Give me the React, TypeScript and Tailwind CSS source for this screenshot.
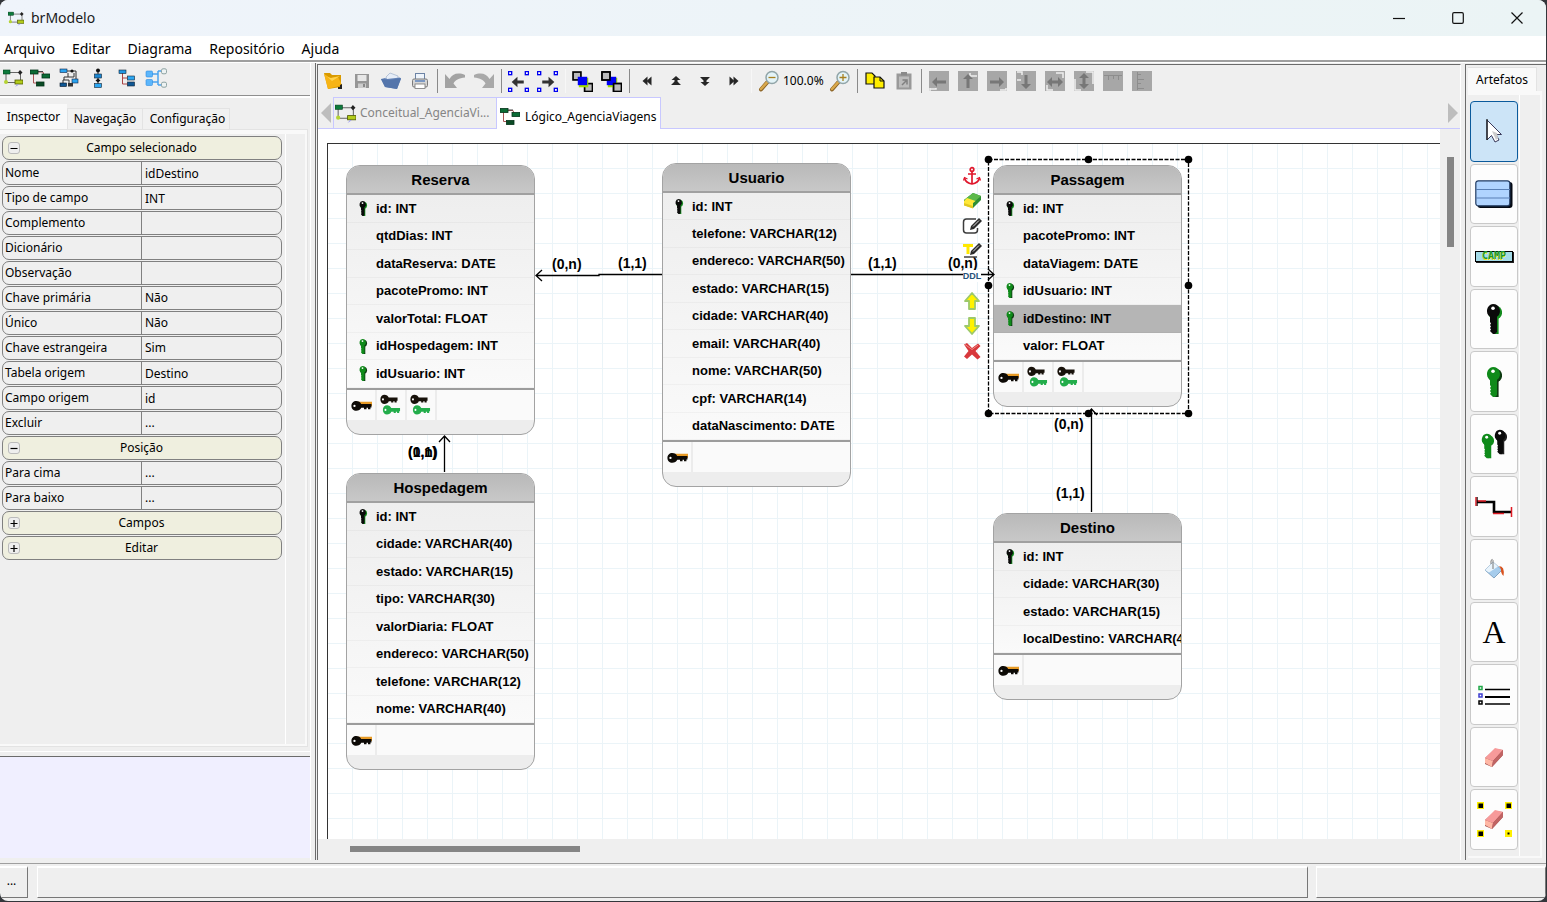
import type { ReactNode } from 'react';

/* ---------- shared icon pieces ---------- */

type Shade = { body: string; shade: string };
const DARK: Shade = { body: '#0a0a0a', shade: '#128a1c' };
const GREEN: Shade = { body: '#0f8a1a', shade: '#0c3a10' };

function UprightKey({ tone, className }: { tone: Shade; className: string }) {
  return (
    <svg viewBox="0 0 16 30" className={className} aria-hidden="true">
      <g fill={tone.shade} transform="translate(1.6 1)">
        <circle cx="7.5" cy="7.5" r="7" />
        <path d="M5 13h6v16H7l-2-2z" />
      </g>
      <g fill={tone.body}>
        <path d="M7 0a7 7 0 0 1 4 12.7V28l-2 2H7l-3-3 1-1.500-1-1.500 1-1.500-1-1.500 1-1.500-1-1.500V12.700A7 7 0 0 1 7 0z" />
      </g>
      <circle cx="7" cy="4.200" r="1.800" fill="#fff" />
    </svg>
  );
}

function FlatKey({ color, glow }: { color: string; glow?: string }) {
  return (
    <g>
      {glow && <path d="M6 1.500h14v4H9z" fill={glow} />}
      <path
        d="M5 .8c2.200 0 4 1.100 4.700 2.800H19.500v3.200h-1v1.700h-2.300v-1.300h-1.400v1.300h-2.400V7.200H9.800C9 9 7.200 10 5 10 2.400 10 .4 8 .4 5.400S2.400.8 5 .8z"
        fill={color}
      />
      <circle cx="3.300" cy="5.400" r="1.100" fill="#fff" />
    </g>
  );
}

function PrimaryKeyIcon() {
  return (
    <svg viewBox="0 0 20 10" className="h-[11px] w-[21px]" aria-hidden="true">
      <FlatKey color="#0d0a06" glow="#e79a25" />
    </svg>
  );
}

function ForeignKeyIcon() {
  return (
    <svg viewBox="0 0 22 22" className="size-[22px]" aria-hidden="true">
      <g transform="translate(0 0) scale(.9 1)">
        <FlatKey color="#17110a" />
      </g>
      <g transform="translate(2.500 10.500) scale(.9 1)">
        <FlatKey color="#23ad4b" />
      </g>
    </svg>
  );
}

function ConceptIcon({ className = 'h-5 w-5' }: { className?: string }) {
  return (
    <svg viewBox="0 0 20 20" className={className} aria-hidden="true">
      <path d="M3 5v9M3 4.500h14M17.500 4v8M3 14.500h12" stroke="#666" fill="none" />
      <rect x="0" y="2" width="7" height="4" fill="#0d7a3c" stroke="#06401d" strokeWidth=".6" />
      <path d="M17 2l2.500 2.500L17 7l-2-2.500z" fill="#222" />
      <circle cx="3" cy="14" r="2" fill="#b5d334" />
      <rect x="12" y="12" width="8" height="4" fill="#b3cc1c" stroke="#4f5a00" strokeWidth=".8" />
      <path d="M12 19l2-2.500h2z" fill="#9a9af0" />
    </svg>
  );
}

function LogicIcon({ className = 'h-5 w-5' }: { className?: string }) {
  return (
    <svg viewBox="0 0 20 20" className={className} aria-hidden="true">
      <path d="M6 4h7l1 3M3.500 6v9h4" stroke="#a55" fill="none" />
      <path d="M6 3.500h7" stroke="#444" />
      <rect x="0" y="2" width="8" height="4" fill="#0b6b35" stroke="#043319" strokeWidth=".8" />
      <rect x="12" y="6" width="8" height="4" fill="#0b6b35" stroke="#043319" strokeWidth=".8" />
      <rect x="6.500" y="14" width="7.500" height="4" fill="#0b4b25" stroke="#043319" strokeWidth=".8" />
    </svg>
  );
}

function HybridIcon() {
  return (
    <svg viewBox="0 0 20 20" className="size-5" aria-hidden="true">
      <path d="M8 3h9v8M9 5v4M15 5v4H5v3M4 12h6v3M4 12v3" stroke="#333" fill="none" />
      <rect x="1" y="1" width="7" height="3.500" fill="#29a3f0" stroke="#124" strokeWidth=".6" />
      <rect x="13" y="11" width="6" height="4" fill="#29a3f0" stroke="#124" strokeWidth=".6" />
      <rect x="1" y="15" width="6.500" height="3.500" fill="#0f5794" stroke="#012" strokeWidth=".6" />
      <circle cx="13" cy="3" r="1.600" fill="#111" />
      <rect x="9" y="15" width="5" height="3.500" fill="#333" />
    </svg>
  );
}

function FlowIcon() {
  return (
    <svg viewBox="0 0 20 20" className="size-5" aria-hidden="true">
      <path d="M10 1v16" stroke="#222" />
      <circle cx="10" cy="2.500" r="2" fill="#111" />
      <rect x="6.500" y="6" width="7" height="4" fill="#1d86d0" stroke="#123" strokeWidth=".6" />
      <path d="M10 10.500l2.500 2-2.500 2-2.500-2z" fill="#111" />
      <rect x="6.500" y="15.500" width="7" height="4" fill="#2da7f2" stroke="#123" strokeWidth=".6" />
    </svg>
  );
}

function TreeIcon() {
  return (
    <svg viewBox="0 0 20 20" className="size-5" aria-hidden="true">
      <path d="M5.500 5v11h6M5.500 10h6" stroke="#a44" fill="none" />
      <rect x="2" y="2" width="7" height="3.500" fill="#2196e3" stroke="#123" strokeWidth=".6" />
      <rect x="10.500" y="8" width="7" height="4" fill="#2da7f2" stroke="#123" strokeWidth=".6" />
      <rect x="10.500" y="14" width="7" height="4" fill="#0f5794" stroke="#123" strokeWidth=".6" />
    </svg>
  );
}

function ShareIcon() {
  return (
    <svg viewBox="0 0 22 20" className="h-5 w-[22px]" aria-hidden="true">
      <path d="M5 6h8M5 14h8M13 3v14M13 3h5M13 17h5" stroke="#4aa3ef" strokeWidth="1.500" fill="none" />
      <rect x="1" y="3" width="6.500" height="6" rx="1" fill="#5cb6fb" stroke="#2d8be0" strokeWidth=".6" />
      <rect x="1" y="11.500" width="6.500" height="6" rx="1" fill="#5cb6fb" stroke="#2d8be0" strokeWidth=".6" />
      <rect x="16.500" y=".8" width="5" height="5" rx="1.500" fill="#eef3f3" stroke="#8ea3a3" />
      <rect x="16.500" y="14.200" width="5" height="5" rx="1.500" fill="#eef3f3" stroke="#8ea3a3" />
    </svg>
  );
}

function Icon20({ children }: { children: ReactNode }) {
  return (
    <svg viewBox="0 0 20 20" className="size-5 shrink-0" aria-hidden="true">
      {children}
    </svg>
  );
}

const corners = [
  [1, 1],
  [17, 1],
  [1, 17],
  [17, 17],
];

function SelectionArrow({ flip }: { flip?: boolean }) {
  return (
    <svg viewBox="0 0 20 20" className="size-[21px]" aria-hidden="true">
      {corners.map(([x, y]) => (
        <rect key={`${x}-${y}`} x={x - 0.5} y={y - 0.5} width="3" height="3" fill="#fff" stroke="#0000f0" strokeWidth="1.300" />
      ))}
      <path d={flip ? 'M16.500 10.500L11 5.500v3.500H5v3h6v3.500z' : 'M3.500 10.500L9 5.500v3.500h6v3H9v3.500z'} fill="#333" />
    </svg>
  );
}

function OrderIcon({ spread }: { spread?: boolean }) {
  return (
    <svg viewBox="0 0 20 20" className="size-[21px]" aria-hidden="true">
      <rect x="1" y="1" width="7.500" height="7.500" fill="#bbb" stroke="#000" strokeWidth="1.600" />
      <rect x="12" y="12" width="7.500" height="7.500" fill="#bbb" stroke="#000" strokeWidth="1.600" />
      <rect x="6.500" y="6.500" width="9" height="9" fill="#a3e000" />
      <rect x="5.500" y="5.500" width="9" height="8" fill="#0000f5" />
      {spread && <rect x="12" y="12" width="7.500" height="7.500" fill="#bbb" stroke="#000" strokeWidth="1.600" />}
      {spread && <rect x="1" y="1" width="7.500" height="7.500" fill="#bbb" stroke="#000" strokeWidth="1.600" />}
    </svg>
  );
}

function DoubleArrow({ turn }: { turn: number }) {
  return (
    <Icon20>
      <g transform={`rotate(${turn} 10 10)`} fill="#262626">
        <path d="M10.500 5.500v9L5.500 10z" />
        <path d="M14.500 5.500v9L9.500 10z" />
      </g>
    </Icon20>
  );
}

function StackArrow({ down }: { down?: boolean }) {
  return (
    <Icon20>
      <g transform={down ? 'rotate(180 10 10)' : undefined} fill="#262626">
        <path d="M10 5l4.500 4h-3v1.500l3.500 3.500H5l3.500-3.500V9h-3z" />
      </g>
    </Icon20>
  );
}

function Lens({ plus }: { plus?: boolean }) {
  return (
    <svg viewBox="0 0 22 22" className="size-[22px] shrink-0" aria-hidden="true">
      <path d="M9.500 12L3 19.500" stroke="#8a6224" strokeWidth="4" strokeLinecap="round" />
      <path d="M9 12.300L3 19" stroke="#d9a84c" strokeWidth="2.500" strokeLinecap="round" />
      <circle cx="14" cy="7.500" r="6" fill="#e3f3f7" stroke="#91a5a8" strokeWidth="1.500" />
      <path d={plus ? 'M10.500 7.500h7M14 4v7' : 'M10.500 7.500h7'} stroke="#a8801f" strokeWidth="1.300" />
    </svg>
  );
}

const alignShapes = [
  'M3 11l5-5v3.500h9v3H8V16z',
  'M10 3l5 5h-3.500v9h-3V8H5z',
  'M17 11l-5-5v3.500H3v3h9V16z',
  'M10 18l5-5h-3.500V4h-3v9H5z',
  'M2 11l5-5v3.500h6V6l5 5-5 5v-3.500H7V16z',
  'M10 2l5 5h-3.500v6H15l-5 5-5-5h3.500V7H5z',
];
const alignTrims = [
  'M1 18h6v-1M1 17v3',
  'M12 2v3h7',
  'M19 17v2h-6',
  'M1 1h5v3M1 9h4',
  'M11 2h7v5M2 14v5h6',
  'M12 1h7v12M1 8v11h6',
];

function AlignIcon({ index }: { index: number }) {
  return (
    <svg viewBox="0 0 20 20" className="size-5" aria-hidden="true">
      <rect width="20" height="20" fill="#a7a7a7" />
      {index < 6 ? (
        <>
          <path d={alignTrims[index]} stroke="#efefef" strokeWidth="1.500" fill="none" />
          <path d={alignShapes[index]} fill="#777" />
        </>
      ) : index === 6 ? (
        <path d="M1 4.500h18M5.500 5v4M10.500 5v3M15.500 5v4" stroke="#8d8d8d" fill="none" />
      ) : (
        <path d="M5.500 1v18M5 3.500h4M5 8.500h7M5 12.500h4M5 17.500h7" stroke="#8d8d8d" fill="none" />
      )}
    </svg>
  );
}

/* ---------- top toolbar ---------- */

const tools: { label: string; icon: ReactNode }[][] = [
  [
    {
      label: 'Abrir',
      icon: (
        <Icon20>
          <path d="M1 2h6l2 2h9v12L5 18z" fill="#d99a00" />
          <path d="M1 3l4 15 14-4-4-8-8 1z" fill="#f7b416" />
          <path d="M1 3l4 3 3 1 9-2-8 5z" fill="#ffd34e" />
          <path d="M17 14l2-1v5h-4v-2h2z" fill="#222" />
        </Icon20>
      ),
    },
    {
      label: 'Salvar',
      icon: (
        <Icon20>
          <path d="M3 3h14v14H3z" fill="#969696" />
          <path d="M5.500 4h9v6h-9z" fill="#e7e7e7" />
          <path d="M6 12.500h8V17H6z" fill="#ccc" />
          <path d="M11 13h2v3h-2z" fill="#888" />
        </Icon20>
      ),
    },
    {
      label: 'Salvar como',
      icon: (
        <Icon20>
          <path d="M5 6l4-4 8 3v4H6z" fill="#e6edf7" stroke="#9db0cc" strokeWidth=".7" />
          <path d="M0 8l4-1 2 1 13-1.500 1 1.500-4 10-12-2z" fill="#6484b8" />
          <path d="M0 8l4 8 12 2 4-11-11 2z" fill="#5475ab" />
        </Icon20>
      ),
    },
    {
      label: 'Imprimir',
      icon: (
        <Icon20>
          <rect x="5.500" y="2.500" width="9" height="7" fill="#eef4fb" stroke="#6c83a5" />
          <rect x="2.500" y="8" width="15" height="8" rx="1.500" fill="#d6d6d6" stroke="#7b7b7b" />
          <path d="M5 10h10" stroke="#5d83bd" strokeWidth="1.500" />
          <rect x="5" y="13" width="10" height="4.500" fill="#fff" stroke="#777" strokeWidth=".8" />
        </Icon20>
      ),
    },
  ],
  [
    {
      label: 'Desfazer',
      icon: (
        <Icon20>
          <path d="M0 3v14h12L8.500 12.500C10 9 14 7 20 6.500V4C13 1 7 3 4.500 8z" fill="#a3a3a3" />
        </Icon20>
      ),
    },
    {
      label: 'Refazer',
      icon: (
        <Icon20>
          <path d="M20 3v14H8l3.500-4.500C10 9 6 7 0 6.500V4c7-3 13-1 15.500 4z" fill="#a9a9a9" />
        </Icon20>
      ),
    },
  ],
  [
    { label: 'Seleção anterior', icon: <SelectionArrow /> },
    { label: 'Próxima seleção', icon: <SelectionArrow flip /> },
  ],
  [
    { label: 'Trazer para frente', icon: <OrderIcon /> },
    { label: 'Enviar para trás', icon: <OrderIcon spread /> },
  ],
  [
    { label: 'Mover para esquerda', icon: <DoubleArrow turn={0} /> },
    { label: 'Mover para cima', icon: <StackArrow /> },
    { label: 'Mover para baixo', icon: <StackArrow down /> },
    { label: 'Mover para direita', icon: <DoubleArrow turn={180} /> },
  ],
];

const clipboard: { label: string; icon: ReactNode }[] = [
  {
    label: 'Copiar',
    icon: (
      <Icon20>
        <path d="M1 2h6l3 3v8H1z" fill="#ffee00" stroke="#111" strokeWidth="1.200" />
        <path d="M9 6h6l4 4v7H9z" fill="#ffee00" stroke="#111" strokeWidth="1.200" />
        <path d="M15 6v4h4" fill="none" stroke="#111" />
      </Icon20>
    ),
  },
  {
    label: 'Colar',
    icon: (
      <Icon20>
        <rect x="2.500" y="2.500" width="15" height="16" fill="#999" />
        <rect x="7" y="1" width="6" height="3.500" fill="#8a8a8a" />
        <rect x="5" y="5.500" width="10" height="11" fill="#bcbcbc" />
        <path d="M8 14l4-4M8.500 9H13v4.500" stroke="#808080" strokeWidth="1.500" fill="none" />
      </Icon20>
    ),
  },
];

const alignLabels = [
  'Alinhar à esquerda',
  'Alinhar acima',
  'Alinhar à direita',
  'Alinhar abaixo',
  'Igualar largura',
  'Igualar altura',
  'Distribuir na horizontal',
  'Distribuir na vertical',
];

function ToolButton({ label, children }: { label: string; children: ReactNode }) {
  return (
    <button type="button" aria-label={label} className="flex h-8 w-[29px] shrink-0 items-center justify-center">
      {children}
    </button>
  );
}

function Divider({ faint }: { faint?: boolean }) {
  return (
    <div className="flex w-1.5 shrink-0 justify-center py-1">
      <div className={faint ? 'h-6 w-px bg-[#f7f7f7]' : 'h-6 w-px bg-[#8a8a8a]'} />
    </div>
  );
}

function MainToolbar() {
  return (
    <div className="flex h-8 items-center overflow-hidden">
      {tools.map((group, i) => (
        <div key={i} className="flex items-center">
          {group.map((t) => (
            <ToolButton key={t.label} label={t.label}>
              {t.icon}
            </ToolButton>
          ))}
          <Divider faint={i === 2 || i === 4} />
        </div>
      ))}
      <ToolButton label="Diminuir zoom">
        <Lens />
      </ToolButton>
      <span className="w-[42px] text-xs whitespace-nowrap">100.0%</span>
      <ToolButton label="Aumentar zoom">
        <Lens plus />
      </ToolButton>
      <Divider />
      {clipboard.map((t) => (
        <ToolButton key={t.label} label={t.label}>
          {t.icon}
        </ToolButton>
      ))}
      <Divider />
      {alignLabels.map((label, i) => (
        <ToolButton key={label} label={label}>
          <AlignIcon index={i} />
        </ToolButton>
      ))}
    </div>
  );
}

/* ---------- inspector ---------- */

type Prop =
  | { kind: 'group'; label: string; open: boolean }
  | { kind: 'text' | 'choice' | 'action'; label: string; value: string };

const props: Prop[] = [
  { kind: 'group', label: 'Campo selecionado', open: true },
  { kind: 'text', label: 'Nome', value: 'idDestino' },
  { kind: 'text', label: 'Tipo de campo', value: 'INT' },
  { kind: 'text', label: 'Complemento', value: '' },
  { kind: 'text', label: 'Dicionário', value: '' },
  { kind: 'text', label: 'Observação', value: '' },
  { kind: 'choice', label: 'Chave primária', value: 'Não' },
  { kind: 'choice', label: 'Único', value: 'Não' },
  { kind: 'choice', label: 'Chave estrangeira', value: 'Sim' },
  { kind: 'text', label: 'Tabela origem', value: 'Destino' },
  { kind: 'text', label: 'Campo origem', value: 'id' },
  { kind: 'action', label: 'Excluir', value: '...' },
  { kind: 'group', label: 'Posição', open: true },
  { kind: 'action', label: 'Para cima', value: '...' },
  { kind: 'action', label: 'Para baixo', value: '...' },
  { kind: 'group', label: 'Campos', open: false },
  { kind: 'group', label: 'Editar', open: false },
];

function PropertyRow({ item, id }: { item: Prop; id: string }) {
  if (item.kind === 'group') {
    return (
      <button
        type="button"
        aria-expanded={item.open}
        className="flex h-6 items-center rounded-[7px] border border-[#808080] bg-[#efefdf] pl-[5px]"
      >
        <svg viewBox="0 0 12 12" className="size-3 shrink-0" aria-hidden="true">
          <rect x=".5" y=".5" width="11" height="11" rx="2.500" fill="#eee" stroke="#bbb" />
          <path d={item.open ? 'M2.500 6.500h7' : 'M2.500 6.500h7M6 3v7'} stroke="#000" strokeWidth="1.200" />
        </svg>
        <span className="flex-1 pr-[18px] text-center">{item.label}</span>
      </button>
    );
  }
  const valueClass = 'h-full w-full min-w-0 appearance-none bg-transparent pl-[3px] text-left outline-none';
  return (
    <div className="grid h-6 grid-cols-[138px_1fr] items-center overflow-hidden rounded-[7px] border border-[#808080]">
      <label htmlFor={id} className="truncate pl-0.5">
        {item.label}
      </label>
      <div className="h-[22px] border-l border-[#808080]">
        {item.kind === 'text' && <input id={id} type="text" defaultValue={item.value} className={valueClass} />}
        {item.kind === 'choice' && (
          <select id={id} defaultValue={item.value} className={valueClass}>
            <option>Não</option>
            <option>Sim</option>
          </select>
        )}
        {item.kind === 'action' && (
          <button id={id} type="button" className={valueClass}>
            {item.value}
          </button>
        )}
      </div>
    </div>
  );
}

const modelIcons = [
  { label: 'Novo conceitual', icon: <ConceptIcon /> },
  { label: 'Novo lógico', icon: <LogicIcon /> },
  { label: 'Novo híbrido', icon: <HybridIcon /> },
  { label: 'Novo fluxo', icon: <FlowIcon /> },
  { label: 'Nova EAP', icon: <TreeIcon /> },
  { label: 'Novo livre', icon: <ShareIcon /> },
];

function Sidebar() {
  return (
    <aside className="flex w-[311px] shrink-0 flex-col border-r border-white">
      <div className="flex h-[33px] shrink-0 border-b border-[#8f8f8f] pt-px">
        {modelIcons.map((m, i) => (
          <button
            key={m.label}
            type="button"
            aria-label={m.label}
            className={`flex h-7 items-center justify-center ${i === 0 ? 'w-[25px]' : 'w-[29px]'}`}
          >
            {m.icon}
          </button>
        ))}
      </div>
      <div role="tablist" className="flex shrink-0 items-end border-t-2 border-white pt-1.5">
        <button role="tab" aria-selected="true" type="button" className="h-[25px] w-[67px] bg-[#f9f9f9]">
          Inspector
        </button>
        <button role="tab" aria-selected="false" type="button" className="h-[21px] w-[76px] border border-b-0 border-[#e3e3e3] bg-[#f1f1f1]">
          Navegação
        </button>
        <button role="tab" aria-selected="false" type="button" className="h-[21px] w-[87px] border border-b-0 border-l-0 border-[#e3e3e3] bg-[#f1f1f1] pl-[3px]">
          Configuração
        </button>
      </div>
      <div className="mr-0.5 flex min-h-0 flex-1 flex-col border-t border-r border-b border-[#e3e3e3] bg-[#f9f9f9] pt-1 pr-0.5 pb-0.5">
        <div className="flex flex-1 bg-[#efefef]">
          <div className="flex w-[286px] flex-col gap-px border-r border-white pt-0.5 pr-[3px] pl-0.5">
            {props.map((item, i) => (
              <PropertyRow key={item.label} item={item} id={`prop-${i}`} />
            ))}
          </div>
        </div>
      </div>
      <div className="mt-1 h-[5px] shrink-0 border-t border-white" />
      <div className="mb-0.5 h-[102px] shrink-0 border-t border-[#6b6b6b] bg-[#f0efff]" />
    </aside>
  );
}

/* ---------- diagram ---------- */

type Field = { text: string; key?: 'pk' | 'fk'; selected?: boolean };
type Entity = { name: string; place: string; rows: string; keys: ('pk' | 'fk')[]; fields: Field[] };

const entities: Entity[] = [
  {
    name: 'Reserva',
    place: 'left-[18px] top-[21px]',
    rows: 'h-[193px]',
    keys: ['pk', 'fk', 'fk'],
    fields: [
      { text: 'id: INT', key: 'pk' },
      { text: 'qtdDias: INT' },
      { text: 'dataReserva: DATE' },
      { text: 'pacotePromo: INT' },
      { text: 'valorTotal: FLOAT' },
      { text: 'idHospedagem: INT', key: 'fk' },
      { text: 'idUsuario: INT', key: 'fk' },
    ],
  },
  {
    name: 'Usuario',
    place: 'left-[334px] top-[19px]',
    rows: 'h-[247px]',
    keys: ['pk'],
    fields: [
      { text: 'id: INT', key: 'pk' },
      { text: 'telefone: VARCHAR(12)' },
      { text: 'endereco: VARCHAR(50)' },
      { text: 'estado: VARCHAR(15)' },
      { text: 'cidade: VARCHAR(40)' },
      { text: 'email: VARCHAR(40)' },
      { text: 'nome: VARCHAR(50)' },
      { text: 'cpf: VARCHAR(14)' },
      { text: 'dataNascimento: DATE' },
    ],
  },
  {
    name: 'Passagem',
    place: 'left-[665px] top-[21px]',
    rows: 'h-[165px]',
    keys: ['pk', 'fk', 'fk'],
    fields: [
      { text: 'id: INT', key: 'pk' },
      { text: 'pacotePromo: INT' },
      { text: 'dataViagem: DATE' },
      { text: 'idUsuario: INT', key: 'fk' },
      { text: 'idDestino: INT', key: 'fk', selected: true },
      { text: 'valor: FLOAT' },
    ],
  },
  {
    name: 'Hospedagem',
    place: 'left-[18px] top-[329px]',
    rows: 'h-[220px]',
    keys: ['pk'],
    fields: [
      { text: 'id: INT', key: 'pk' },
      { text: 'cidade: VARCHAR(40)' },
      { text: 'estado: VARCHAR(15)' },
      { text: 'tipo: VARCHAR(30)' },
      { text: 'valorDiaria: FLOAT' },
      { text: 'endereco: VARCHAR(50)' },
      { text: 'telefone: VARCHAR(12)' },
      { text: 'nome: VARCHAR(40)' },
    ],
  },
  {
    name: 'Destino',
    place: 'left-[665px] top-[369px]',
    rows: 'h-[110px]',
    keys: ['pk'],
    fields: [
      { text: 'id: INT', key: 'pk' },
      { text: 'cidade: VARCHAR(30)' },
      { text: 'estado: VARCHAR(15)' },
      { text: 'localDestino: VARCHAR(40)' },
    ],
  },
];

function EntityCard({ entity }: { entity: Entity }) {
  return (
    <section
      className={`absolute w-[189px] overflow-hidden rounded-[14px] border border-[#a3a3a3] bg-[#ededed] font-bold ${entity.place}`}
    >
      <h2 className="h-[29px] border-b-2 border-[#a0a0a0] bg-linear-to-b from-[#b9b9b9] to-[#c8c8c8] text-center text-[15px] leading-[28px]">
        {entity.name}
      </h2>
      <ul className={`grid auto-rows-fr bg-linear-to-b from-[#eeeeee] to-[#fafafa] text-[13px] ${entity.rows}`}>
        {entity.fields.map((f) => (
          <li
            key={f.text}
            className={`flex items-center border-b border-black/3 pl-[11px] whitespace-nowrap ${f.selected ? 'bg-[#b5b5b5]' : ''}`}
          >
            <span className="flex w-[18px] shrink-0">
              {f.key && <UprightKey tone={f.key === 'pk' ? DARK : GREEN} className="h-[15px] w-2.5" />}
            </span>
            {f.text}
          </li>
        ))}
      </ul>
      <div className="flex h-8 border-t-2 border-[#9c9c9c] bg-[#fafafa]">
        {entity.keys.map((k, i) => (
          <div key={i} className="flex w-[30px] items-center justify-center border-r-2 border-[#ececec]">
            {k === 'pk' ? <PrimaryKeyIcon /> : <ForeignKeyIcon />}
          </div>
        ))}
      </div>
      <div className="h-3.5" />
    </section>
  );
}

const cardinalities = [
  { text: '(0,n)', place: 'left-[224px] top-[110px]' },
  { text: '(1,1)', place: 'left-[290px] top-[109px]' },
  { text: '(1,1)', place: 'left-[540px] top-[109px]' },
  { text: '(0,n)', place: 'left-[620px] top-[109px]' },
  { text: '(0,n)', place: 'left-[80px] top-[298px]' },
  { text: '(1,1)', place: 'left-[80px] top-[298px]' },
  { text: '(0,n)', place: 'left-[726px] top-[270px]' },
  { text: '(1,1)', place: 'left-[728px] top-[339px]' },
];

const handles = [
  [660, 15],
  [760, 15],
  [860, 15],
  [660, 141],
  [860, 141],
  [660, 269],
  [760, 269],
  [860, 269],
];

const pencil = (
  <g>
    <path d="M8 14l1-4 8-8 3 3-8 8z" fill="#2b2b2b" />
    <path d="M11 10.500l6-6" stroke="#ddd" strokeWidth="1" />
  </g>
);

const quickActions = [
  {
    label: 'Ancorar',
    icon: (
      <Icon20>
        <g fill="none" stroke="#e0182d" strokeWidth="1.700">
          <circle cx="10" cy="3.500" r="1.800" />
          <path d="M10 5.500V18M6 8h8M2.500 12c1 4 4 5.500 7.500 6 3.500-.5 6.500-2 7.500-6" />
          <path d="M1.500 14.500l1-3 3 1.500M18.500 14.500l-1-3-3 1.500" strokeWidth="1.200" />
        </g>
      </Icon20>
    ),
  },
  {
    label: 'Limpar',
    icon: (
      <Icon20>
        <path d="M11 2l8 3v4l-8 8-9-3V9z" fill="#2f8f35" />
        <path d="M11 2l8 3-8 7-9-3z" fill="#5cb94a" />
        <path d="M2 10l3-3 8.500 3L11 12v5l-9-3z" fill="#ffe838" />
        <path d="M2 12l9 3v2.500l-9-3z" fill="#e3c81e" />
      </Icon20>
    ),
  },
  {
    label: 'Editar',
    icon: (
      <Icon20>
        <path d="M14 3H4.500Q1.500 3 1.500 6v8q0 3 3 3h8q3 0 3-3v-2" fill="none" stroke="#3c3c3c" strokeWidth="1.500" />
        {pencil}
      </Icon20>
    ),
  },
  {
    label: 'Editar texto',
    icon: (
      <Icon20>
        <path d="M1 3h10v3H7.500v7h-3V6H1z" fill="#ffe800" />
        <path d="M2 16h13" stroke="#444" strokeWidth="1.500" />
        {pencil}
      </Icon20>
    ),
  },
  { label: 'DDL', icon: null },
  {
    label: 'Subir',
    icon: (
      <Icon20>
        <path d="M10 2l7 8h-4v8H7v-8H3z" fill="#fff200" stroke="#9dc96a" strokeWidth="1.800" strokeLinejoin="round" />
      </Icon20>
    ),
  },
  {
    label: 'Descer',
    icon: (
      <Icon20>
        <path d="M10 18l7-8h-4V2H7v8H3z" fill="#fff200" stroke="#9dc96a" strokeWidth="1.800" strokeLinejoin="round" />
      </Icon20>
    ),
  },
  {
    label: 'Remover',
    icon: (
      <Icon20>
        <path d="M2 3.500L5 2l5 5 6-4.500L18.500 5l-5 5 5 6-3 2.500-5.500-5L5 18l-3-2.500L6.500 10z" fill="#d8383c" />
        <path d="M3 3.500l7 5 6-4.500" stroke="#ee8a86" fill="none" />
      </Icon20>
    ),
  },
];

function Diagram() {
  return (
    <div className="relative min-w-0 flex-1 overflow-hidden border-t border-l border-[#333] bg-white font-['Liberation_Sans',sans-serif]">
      <svg className="absolute inset-0 size-full" aria-hidden="true">
        <defs>
          <pattern id="grid" width="25" height="25" patternUnits="userSpaceOnUse">
            <path d="M24.500 25V0M0 24.500H25" stroke="#ebf4f8" fill="none" />
          </pattern>
        </defs>
        <rect width="100%" height="100%" fill="url(#grid)" />
      </svg>
      {entities.map((e) => (
        <EntityCard key={e.name} entity={e} />
      ))}
      <svg className="pointer-events-none absolute inset-0 size-full" aria-hidden="true">
        <g stroke="#000" fill="none" strokeWidth="1.300">
          <path d="M208 131.500H271V130.500H334M214 126l-6 5.500 6 5.500" />
          <path d="M523 130.500H666M660 125l6 5.500-6 5.500" />
          <path d="M116.500 328V292M111 298l5.500-6 5.500 6" />
          <path d="M763.500 368V265M758 271l5.500-6 5.500 6" />
          <rect x="660.500" y="15.500" width="200" height="254" strokeDasharray="4 1.500" />
        </g>
        {handles.map(([x, y]) => (
          <circle key={`${x}-${y}`} cx={x + 0.5} cy={y + 0.5} r="3.800" />
        ))}
      </svg>
      {cardinalities.map((c, i) => (
        <span key={i} className={`absolute text-sm leading-5 font-bold ${c.place}`}>
          {c.text}
        </span>
      ))}
      <div className="absolute top-[22px] left-[634px] flex flex-col gap-[5px]">
        {quickActions.map((a) => (
          <button key={a.label} type="button" aria-label={a.label} className="flex size-5 items-center justify-center">
            {a.icon ?? <span className="bg-white text-[9px] leading-3 font-bold text-[#28527a]">DDL</span>}
          </button>
        ))}
      </div>
    </div>
  );
}

function Workspace() {
  return (
    <section className="mt-px flex min-w-0 flex-1 flex-col border-t border-r border-l border-t-[#6b6b6b] border-r-white border-l-[#6b6b6b]">
      <MainToolbar />
      <div className="flex h-8 shrink-0 items-stretch justify-between border-b border-[#c8c8ff]">
        <div className="flex">
          <button type="button" aria-label="Abas anteriores" className="flex w-[15px] items-center justify-center">
            <svg viewBox="0 0 10 20" className="h-5 w-2.5">
              <path d="M10 0v20L0 10z" fill="#bdbdbd" />
            </svg>
          </button>
          <div role="tablist" className="flex">
            <button role="tab" aria-selected="false" type="button" className="flex w-[163px] items-center gap-1 border-t border-l border-[#c8c8ff] pl-px text-[#858585]">
              <ConceptIcon className="h-[21px] w-[21px] shrink-0" />
              <span className="whitespace-nowrap">Conceitual_AgenciaVi...</span>
            </button>
            <button role="tab" aria-selected="true" type="button" className="-mb-px flex w-[165px] items-center gap-[5px] border-t border-r border-l border-[#c8c8ff] bg-white pt-1.5 pl-[3px]">
              <LogicIcon className="h-[21px] w-5 shrink-0" />
              <span className="whitespace-nowrap">Lógico_AgenciaViagens</span>
            </button>
          </div>
        </div>
        <button type="button" aria-label="Próximas abas" className="flex w-[15px] items-center justify-center">
          <svg viewBox="0 0 10 20" className="h-5 w-2.5">
            <path d="M0 0v20L10 10z" fill="#bdbdbd" />
          </svg>
        </button>
      </div>
      <div className="flex min-h-0 flex-1">
        <div className="flex min-w-0 flex-1 bg-white pt-[14px] pl-[9px]">
          <Diagram />
        </div>
        <div className="w-5 pt-7 pl-[7px]">
          <div className="h-[90px] w-[7px] bg-[#858585]" />
        </div>
      </div>
      <div className="h-[21px] shrink-0 pt-[7px] pl-8">
        <div className="h-1.5 w-[230px] bg-[#858585]" />
      </div>
    </section>
  );
}

/* ---------- artefact palette ---------- */

const eraser = (
  <g>
    <path d="M16 9l8 1v5L13 27l-7-3v-6z" fill="#9b4b4b" />
    <path d="M16 8l8 2-10 11-8-3z" fill="#f79a9a" />
    <path d="M6 18l8 3-1 6-7-4z" fill="#ffb7a5" />
    <path d="M14 21L24 10v5L13 27z" fill="#c06464" />
  </g>
);

const artefacts = [
  {
    label: 'Selecionar',
    icon: (
      <svg viewBox="0 0 16 24" className="h-6 w-4" aria-hidden="true">
        <path d="M1 1v20l4.500-4.500L9 23l4-2-3-5.500h5.500z" fill="#fff" stroke="#39395a" />
        <path d="M6 12l5 2 1 5-2 2z" fill="#ccc" />
        <path d="M1 0v21" stroke="#111" strokeWidth="1.200" />
      </svg>
    ),
  },
  {
    label: 'Tabela',
    icon: (
      <svg viewBox="0 0 38 28" className="h-7 w-[38px]" aria-hidden="true">
        <rect x="2.500" y="2" width="35" height="26" rx="3" fill="#050a14" />
        <rect x=".8" y=".8" width="34" height="25" rx="2.500" fill="#b0d4ff" stroke="#223c63" strokeWidth="1.200" />
        <path d="M1 9.500h34M1 18h34" stroke="#587fb5" strokeWidth="1.200" />
      </svg>
    ),
  },
  {
    label: 'Campo',
    icon: (
      <span className="flex h-[11px] w-[38px] items-center justify-center border border-black bg-[#a4dbe8] font-['DejaVu_Sans_Mono',monospace] text-[10px] leading-none font-bold text-[#16953a] shadow-[1px_1px_0_#222] [text-shadow:0_1px_0_#ffee00]">
        CAMP
      </span>
    ),
  },
  { label: 'Chave primária', icon: <UprightKey tone={DARK} className="h-[30px] w-4" /> },
  { label: 'Chave estrangeira', icon: <UprightKey tone={GREEN} className="h-[30px] w-4" /> },
  {
    label: 'Chave composta',
    icon: (
      <span className="flex items-start">
        <UprightKey tone={{ body: '#0f8a1a', shade: '#0f8a1a' }} className="mt-1 h-[26px] w-[13px]" />
        <UprightKey tone={{ body: '#0a0a0a', shade: '#222' }} className="h-[26px] w-[13px]" />
      </span>
    ),
  },
  {
    label: 'Relacionamento',
    icon: (
      <svg viewBox="0 0 38 22" className="h-[22px] w-[38px]" aria-hidden="true">
        <path d="M2 6h17v10h17" fill="none" stroke="#000" strokeWidth="2.600" />
        <path d="M2 5h9M18 17.500h11" stroke="#e01b24" strokeWidth="1.500" />
        <path d="M1 1v9M36.500 11v10" stroke="#e01b24" strokeWidth="1.500" />
        <path d="M2.200 1v9" stroke="#000" />
      </svg>
    ),
  },
  {
    label: 'Cor',
    icon: (
      <svg viewBox="0 0 22 22" className="size-[22px]" aria-hidden="true">
        <path d="M10 4l9 8-8 8-9-8z" fill="#a6ccec" stroke="#6f93b5" strokeWidth=".8" />
        <path d="M10 4l5 4.500-9 6L2 12z" fill="#e9f4fc" />
        <path d="M10 11V2.500q-.5-2-2 0V6" fill="none" stroke="#777" />
        <path d="M16 8q6 0 4.500 10-3-3-2.500-7z" fill="#d9521e" />
      </svg>
    ),
  },
  {
    label: 'Texto',
    icon: <span className="font-['Liberation_Serif',serif] text-[32px] leading-8 text-black">A</span>,
  },
  {
    label: 'Legenda',
    icon: (
      <svg viewBox="0 0 32 20" className="h-5 w-8" aria-hidden="true">
        <path d="M7 4.500h25M7 19h25" stroke="#000" strokeWidth="1.300" />
        <path d="M7 12h25" stroke="#000" strokeWidth="2" />
        <g fill="#fff" strokeWidth="1.500">
          <rect x="1" y="1.500" width="3" height="3" stroke="#22a84a" />
          <rect x="1" y="9" width="3" height="3" stroke="#3c3cd0" />
          <rect x="1" y="16" width="3" height="3" stroke="#000" />
        </g>
      </svg>
    ),
  },
  {
    label: 'Apagar',
    icon: (
      <svg viewBox="0 0 30 34" className="h-[34px] w-[30px]" aria-hidden="true">
        {eraser}
      </svg>
    ),
  },
  {
    label: 'Apagar seleção',
    icon: (
      <svg viewBox="-2 0 35 36" className="h-9 w-[35px]" aria-hidden="true">
        {[
          [-2, 0],
          [26, 0],
          [-2, 28],
          [26, 28],
        ].map(([x, y], i) => (
          <g key={i}>
            <rect x={x} y={y} width="7" height="7" fill="#fff000" />
            <rect x={i === 3 ? x + 2.5 : x + 1.5} y={i === 3 ? y + 2.5 : y + 1.5} width={i === 3 ? 2 : 4.5} height={i === 3 ? 2 : 4.5} fill="#000" />
          </g>
        ))}
        {eraser}
      </svg>
    ),
  },
];

function Palette() {
  return (
    <aside className="mt-px ml-1 flex w-[81px] shrink-0 flex-col border-t border-l border-[#6b6b6b] pt-0.5 pl-0.5">
      <div role="tablist" className="flex shrink-0">
        <button role="tab" aria-selected="true" type="button" className="h-6 w-[69px] border-t border-r border-[#e3e3e3] bg-[#f9f9f9]">
          Artefatos
        </button>
      </div>
      <div className="mr-1 mb-0.5 flex min-h-0 flex-1 flex-col border-r-2 border-b-2 border-[#f9f9f9] bg-[#efefef]">
        <div className="h-1 shrink-0 bg-[#f9f9f9]" />
        <div className="grid w-[52px] flex-1 auto-rows-fr gap-0.5 border-r border-white pt-1.5 pr-px pb-1.5 pl-0.5">
          {artefacts.map((a, i) => (
            <button
              key={a.label}
              type="button"
              aria-label={a.label}
              className={`flex min-h-0 items-center justify-center rounded border ${
                i === 0 ? 'border-[#0a5a9c] bg-[#cce4f7]' : 'border-[#c9c9c9] bg-[#fdfdfd]'
              }`}
            >
              {a.icon}
            </button>
          ))}
        </div>
      </div>
    </aside>
  );
}

/* ---------- window ---------- */

const menus = ['Arquivo', 'Editar', 'Diagrama', 'Repositório', 'Ajuda'];

export default function App() {
  return (
    <div className="flex h-screen bg-[#33363b] pr-px pb-px font-['Noto_Sans','Open_Sans',sans-serif] text-xs text-black">
      <div className="flex min-w-0 flex-1 flex-col overflow-hidden rounded-lg bg-[#efefef]">
        <header className="flex h-9 shrink-0 items-center bg-linear-to-r from-[#eff4fb] to-[#ebf4f5] pl-2">
          <ConceptIcon className="h-[17px] w-4" />
          <h1 className="flex-1 pl-[7px] text-sm text-[#1a1a1a]">brModelo</h1>
          <div className="flex">
            {[
              { label: 'Minimizar', d: 'M0 6.500h12' },
              { label: 'Maximizar', d: 'M2 .7h8q1.300 0 1.300 1.300v8q0 1.300-1.300 1.300H2Q.7 11.300.7 10V2Q.7.700 2 .7z' },
              { label: 'Fechar', d: 'M.5.500l11 11M11.500.500l-11 11' },
            ].map((b) => (
              <button key={b.label} type="button" aria-label={b.label} className="flex h-9 w-[59px] items-center justify-center">
                <svg viewBox="0 0 12 12" className="size-3">
                  <path d={b.d} fill="none" stroke="#111" strokeWidth="1.200" />
                </svg>
              </button>
            ))}
          </div>
        </header>
        <nav className="flex h-[26px] shrink-0 items-center gap-[17px] border-b-2 border-[#9f9f9f] bg-white pt-px pl-1 text-sm">
          {menus.map((m) => (
            <button key={m} type="button">
              {m}
            </button>
          ))}
        </nav>
        <main className="flex min-h-0 flex-1 border-t border-white">
          <Sidebar />
          <div className="mr-px ml-1 w-px bg-[#6b6b6b]" />
          <Workspace />
          <Palette />
        </main>
        <footer className="mt-[3px] flex h-[38px] shrink-0 gap-2 border-t border-[#9f9f9f] pt-0.5 pb-[3px]">
          <button type="button" className="w-7 border-t-2 border-r border-b border-t-white border-r-[#777] border-b-[#777] pr-1 pb-1">
            ...
          </button>
          <div className="ml-px flex-1 border border-t-2 border-t-white border-r-[#777] border-b-[#777] border-l-white" />
          <div className="w-[230px] border border-t-2 border-t-white border-r-[#777] border-b-[#777] border-l-white" />
        </footer>
      </div>
    </div>
  );
}
